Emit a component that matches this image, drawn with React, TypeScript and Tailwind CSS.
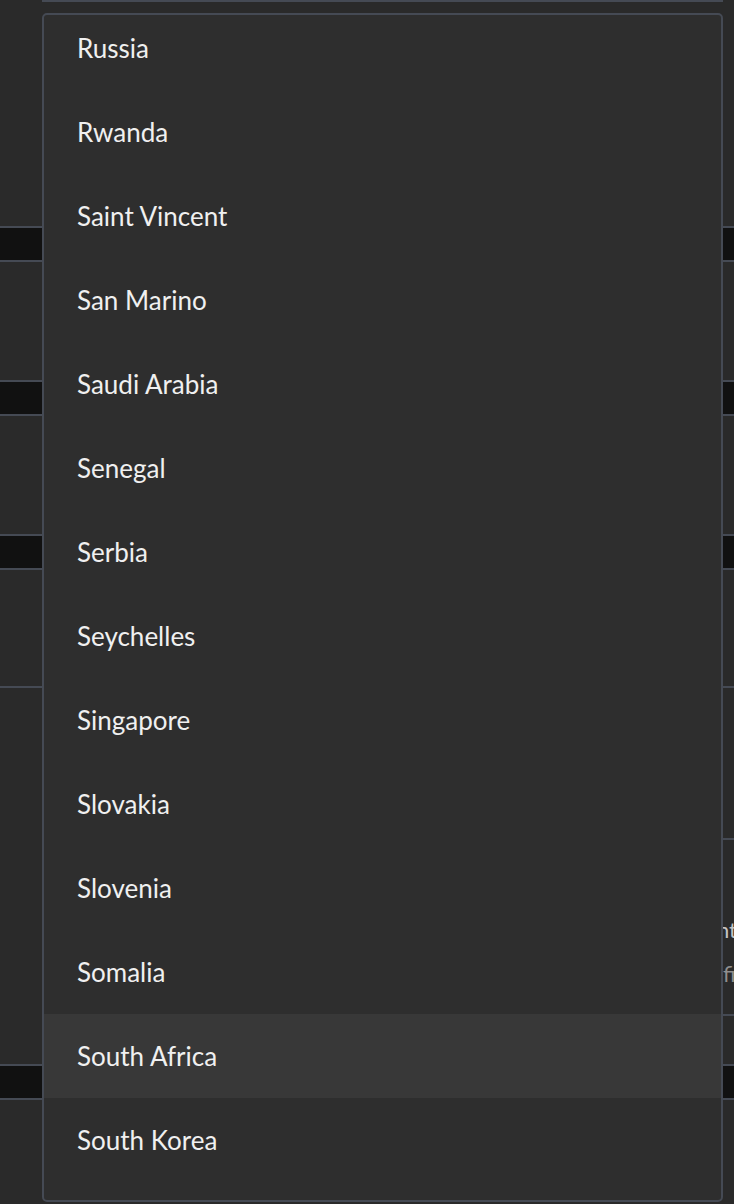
import React from "react";

const items = [
  "Russia",
  "Rwanda",
  "Saint Vincent",
  "San Marino",
  "Saudi Arabia",
  "Senegal",
  "Serbia",
  "Seychelles",
  "Singapore",
  "Slovakia",
  "Slovenia",
  "Somalia",
  "South Africa",
  "South Korea",
];

function Band() {
  return (
    <div className="border-y-2 border-[#454a54] bg-[#111111] h-[36px]" />
  );
}

export default function App() {
  return (
    <div
      className="relative w-[734px] h-[1204px] overflow-hidden bg-[#2a2a2a] text-white"
      style={{ fontFamily: "Lato, 'Noto Sans', sans-serif" }}
    >
      {/* background page */}
      <div className="flex flex-col">
        <div className="h-[226px] relative">
          <div className="ml-[42px] w-[681px] h-[2px] bg-[#454a54]" />
        </div>
        <Band />
        <div className="h-[118px]" />
        <Band />
        <div className="h-[118px]" />
        <Band />
        <div className="h-[118px] border-b-2 border-[#454a54]" />
        <div className="h-[376px] flex justify-end">
          <div className="w-[20px] mt-[150px] h-[178px] border-y-2 border-[#454a54] flex flex-col pt-[78px] gap-[20px] text-[22px] leading-[24px] whitespace-nowrap">
            <span className="text-[#c4c4c4] ml-[3px]">nt</span>
            <span className="text-[#8f8f8f] ml-[9px]">fi</span>
          </div>
        </div>
        <Band />
        <div className="h-[104px]" />
      </div>

      {/* dropdown overlay */}
      <div className="absolute left-[42px] top-[13px] w-[681px] h-[1189px] rounded-[5px] border-2 border-[#454a54] bg-[#2e2e2e] overflow-hidden">
        <ul className="-mt-[9px] flex flex-col">
          {items.map((name) => (
            <li
              key={name}
              className={
                "h-[84px] flex items-center pl-[33px] text-[26px] text-[#f0f0f0] " +
                (name === "South Africa" ? "bg-[#383838]" : "")
              }
            >
              {name}
            </li>
          ))}
        </ul>
      </div>
    </div>
  );
}
